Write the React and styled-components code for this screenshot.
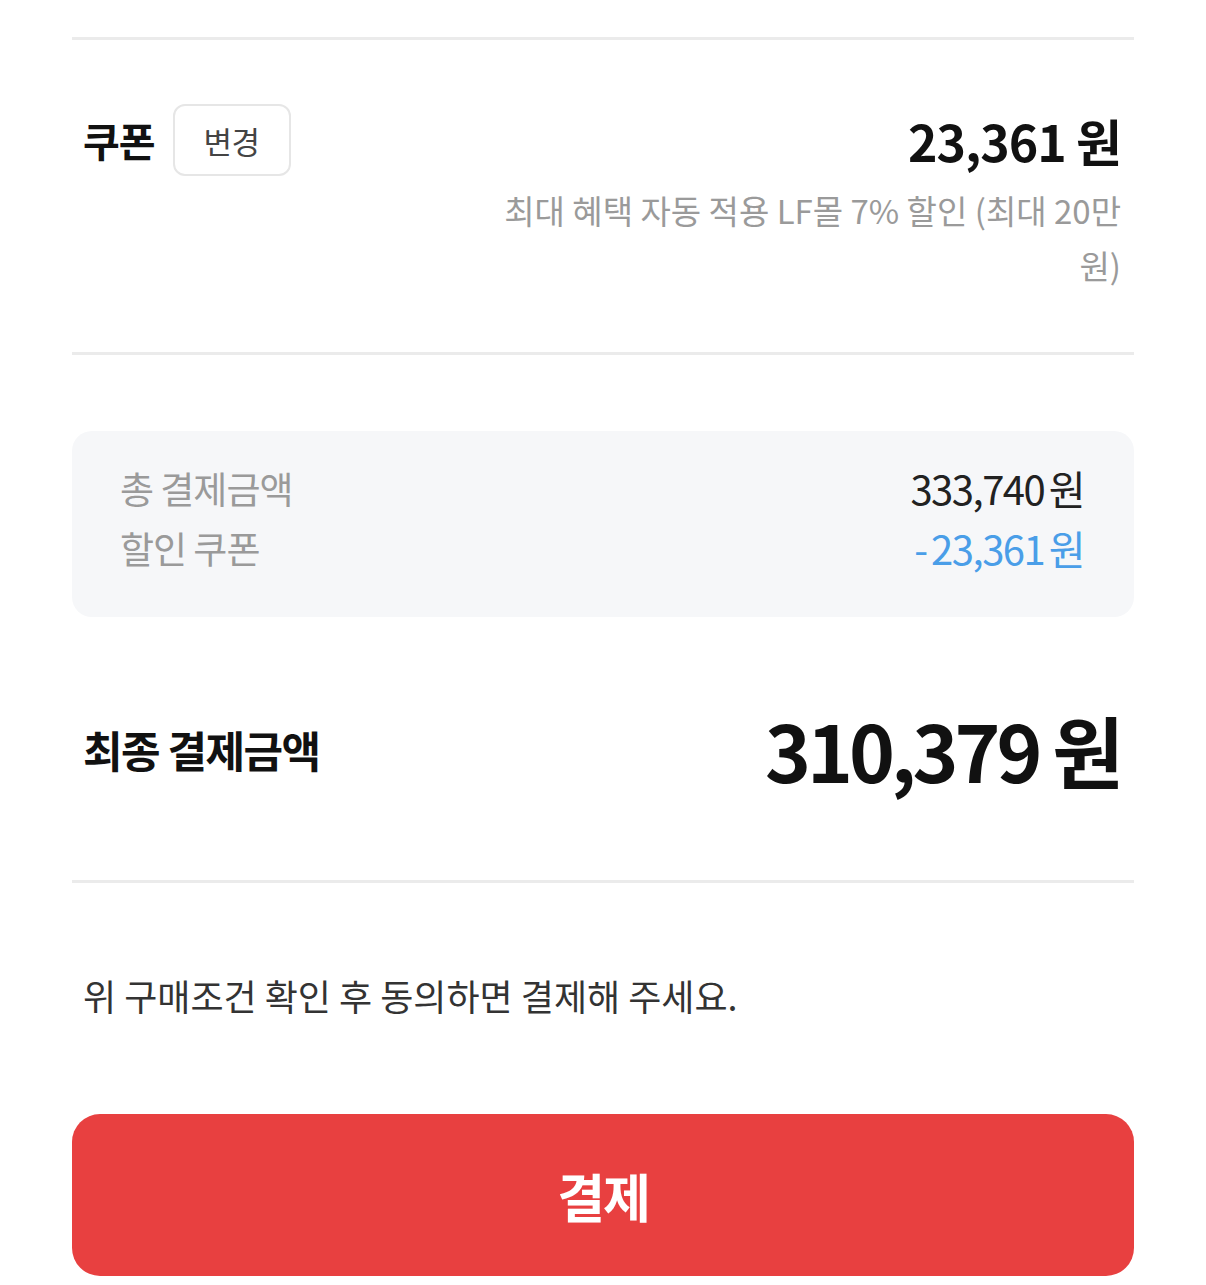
import styled, { createGlobalStyle } from 'styled-components'

const colors = {
  text: '#111111',
  sub: '#9a9a9a',
  line: '#ebebeb',
  box: '#f6f7f9',
  blue: '#4a9ee8',
  red: '#e84040',
}

const GlobalStyle = createGlobalStyle`
  body {
    margin: 0;
    background: #ffffff;
    font-family: "Noto Sans CJK KR", "Noto Sans", sans-serif;
    color: ${colors.text};
  }
`

function App() {
  return (
    <Page>
      <GlobalStyle />
      <Divider />
      <CouponSection>
        <CouponHead>
          <TitleGroup>
            <CouponTitle>쿠폰</CouponTitle>
            <ChangeButton>변경</ChangeButton>
          </TitleGroup>
          <CouponAmount>23,361 원</CouponAmount>
        </CouponHead>
        <CouponNote>최대 혜택 자동 적용 LF몰 7% 할인 (최대 20만 원)</CouponNote>
      </CouponSection>
      <Divider />
      <SummaryBox>
        <SummaryRow>
          <SummaryLabel>총 결제금액</SummaryLabel>
          <SummaryValue>333,740 원</SummaryValue>
        </SummaryRow>
        <SummaryRow>
          <SummaryLabel>할인 쿠폰</SummaryLabel>
          <SummaryValue discount>- 23,361 원</SummaryValue>
        </SummaryRow>
      </SummaryBox>
      <FinalRow>
        <FinalLabel>최종 결제금액</FinalLabel>
        <FinalAmount>310,379 원</FinalAmount>
      </FinalRow>
      <Divider />
      <Notice>위 구매조건 확인 후 동의하면 결제해 주세요.</Notice>
      <PayButton>결제</PayButton>
    </Page>
  );
}

export default App;

const Page = styled.div`
  padding: 37px 72px 9px;
  display: flex;
  flex-direction: column;
`;

const Divider = styled.div`
  height: 3px;
  background-color: ${colors.line};
`;

const CouponSection = styled.div`
  padding: 64px 13px 59px 11px;
  display: flex;
  flex-direction: column;
  align-items: flex-end;
`;

const CouponHead = styled.div`
  align-self: stretch;
  display: flex;
  justify-content: space-between;
  align-items: center;
`;

const TitleGroup = styled.div`
  display: flex;
  align-items: center;
  gap: 18px;
`;

const CouponTitle = styled.span`
  font-size: 40px;
  font-weight: 700;
  letter-spacing: -1px;
`;

const ChangeButton = styled.button`
  width: 118px;
  height: 72px;
  border: 2px solid #e6e6e6;
  border-radius: 12px;
  background: #ffffff;
  font-family: inherit;
  font-size: 31px;
  color: #444444;
  letter-spacing: -0.5px;
`;

const CouponAmount = styled.span`
  font-size: 50px;
  font-weight: 700;
  letter-spacing: -1px;
`;

const CouponNote = styled.p`
  margin: 7px 0 0;
  max-width: 640px;
  text-align: right;
  font-size: 33px;
  line-height: 55px;
  color: ${colors.sub};
`;

const SummaryBox = styled.div`
  margin-top: 76px;
  background-color: ${colors.box};
  border-radius: 20px;
  padding: 30px 50px 42px 48px;
  display: flex;
  flex-direction: column;
  gap: 6px;
`;

const SummaryRow = styled.div`
  display: flex;
  justify-content: space-between;
  align-items: center;
  height: 54px;
`;

const SummaryLabel = styled.span`
  font-size: 37px;
  color: ${colors.sub};
  letter-spacing: -1px;
`;

const SummaryValue = styled.span`
  font-size: 40px;
  color: ${({ discount }) => (discount ? colors.blue : '#222222')};
  letter-spacing: -1.5px;
  word-spacing: -3px;
`;

const FinalRow = styled.div`
  display: flex;
  justify-content: space-between;
  align-items: center;
  padding: 82px 14px 81px 11px;
`;

const FinalLabel = styled.span`
  font-size: 43px;
  font-weight: 700;
  letter-spacing: -1.5px;
`;

const FinalAmount = styled.span`
  font-size: 78px;
  font-weight: 700;
  letter-spacing: -4px;
  line-height: 100px;
`;

const Notice = styled.p`
  margin: 0;
  padding: 90px 14px 96px 11px;
  font-size: 36px;
  line-height: 45px;
  color: #333333;
`;

const PayButton = styled.button`
  height: 162px;
  border: none;
  border-radius: 28px;
  background-color: ${colors.red};
  color: #ffffff;
  font-family: inherit;
  font-size: 52px;
  font-weight: 700;
  letter-spacing: -2px;
`;
